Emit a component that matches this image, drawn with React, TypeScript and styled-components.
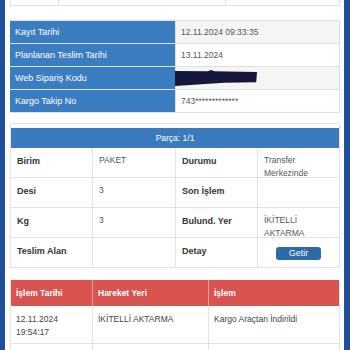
import { Fragment } from "react";
import styled, { createGlobalStyle } from "styled-components";

const GlobalStyle = createGlobalStyle`
  html, body {
    margin: 0;
    padding: 0;
    background: #fff;
  }
  body {
    font-family: "Liberation Sans", Arial, sans-serif;
    -webkit-font-smoothing: antialiased;
  }
`;

const Page = styled.div`
  box-sizing: border-box;
  height: 350px;
  overflow: hidden;
  border-left: 5px solid #1f4f9b;
  border-right: 6px solid #1f4f9b;
  padding: 0 4px 0 5px;
`;

const PrevTable = styled.div`
  display: grid;
  grid-template-columns: 48px 167px 1fr;
  height: 5px;
  border: 1px solid #e2e2e2;
  border-top: none;
`;

const PrevCell = styled.div`
  border-right: 1px solid #e2e2e2;
  &:last-child {
    border-right: none;
  }
`;

const InfoTable = styled.div`
  margin-top: 14px;
  display: grid;
  grid-template-columns: 165px 1fr;
  border: 1px solid #e0e0e0;
  border-left: none;
`;

const InfoLabel = styled.div`
  height: 22px;
  display: flex;
  align-items: center;
  padding-left: 5px;
  background: #3b7dc1;
  color: #fff;
  font-size: 9px;
  border-bottom: 1px solid #dbe6f2;
  &:nth-last-child(2) {
    border-bottom: none;
  }
`;

const InfoValue = styled.div<{ $striped?: boolean }>`
  height: 22px;
  display: flex;
  align-items: center;
  padding-left: 5px;
  background: ${({ $striped }) => ($striped ? "#f5f5f5" : "#fff")};
  color: #555;
  font-size: 8.5px;
  border-left: 1px solid #e0e0e0;
  border-bottom: 1px solid #e0e0e0;
  &:last-child {
    border-bottom: none;
  }
`;

const Redacted = styled.span`
  display: inline-block;
  margin-left: -6px;
  width: 82px;
  height: 16px;
  background: #16173a;
  clip-path: polygon(0 6%, 40% 8%, 44% 0, 48% 8%, 100% 12%, 99% 76%, 60% 80%, 0 100%);
`;

const RedactedTail = styled.span`
  font-size: 8px;
  color: #777;
  margin-left: -5px;
`;

const Panel = styled.div`
  margin-top: 10px;
  border: 1px solid #e3e3e3;
  border-radius: 2px;
  padding-top: 4px;
`;

const PanelHeader = styled.div`
  height: 20px;
  display: flex;
  align-items: center;
  justify-content: center;
  background: #3a7bbf;
  color: #fff;
  font-size: 8.5px;
`;

const PartGrid = styled.div`
  display: grid;
  grid-template-columns: 82px 83px 82px 1fr;
`;

const PartCell = styled.div<{ $bold?: boolean; $last?: boolean }>`
  height: 23px;
  padding: 6px 5px 0 6px;
  border-right: 1px solid #e3e3e3;
  border-bottom: ${({ $last }) => ($last ? "none" : "1px solid #e3e3e3")};
  font-size: ${({ $bold }) => ($bold ? "9px" : "8.5px")};
  font-weight: ${({ $bold }) => ($bold ? 700 : 400)};
  color: ${({ $bold }) => ($bold ? "#333" : "#555")};
  line-height: ${({ $bold }) => ($bold ? "14px" : "13px")};
  &:nth-child(4n) {
    border-right: none;
  }
`;

const ButtonCell = styled(PartCell)`
  display: flex;
  justify-content: center;
  align-items: center;
  padding: 2px 6px 0;
  height: 27px;
`;

const GetirButton = styled.button`
  width: 45px;
  height: 13px;
  padding: 0;
  border: none;
  border-radius: 3px;
  background: #2c6aa6;
  color: #fff;
  font-family: inherit;
  font-size: 9px;
  line-height: 13px;
`;

const MoveTable = styled.div`
  margin-top: 12px;
  display: grid;
  grid-template-columns: 82px 116px 1fr;
  border: 1px solid #e3e3e3;
  border-top: none;
`;

const MoveHead = styled.div`
  height: 26px;
  display: flex;
  align-items: center;
  padding-left: 5px;
  background: #d9534f;
  color: #fff;
  font-size: 8.5px;
  font-weight: 700;
  border-right: 1px solid #e79a98;
  &:nth-child(3) {
    border-right: none;
  }
`;

const MoveCell = styled.div`
  min-height: 30px;
  padding: 7px 5px 0;
  font-size: 8.5px;
  line-height: 13px;
  color: #444;
  border-right: 1px solid #e3e3e3;
  border-bottom: 1px solid #e3e3e3;
  &:nth-child(3n) {
    border-right: none;
  }
`;

const info = [
  { label: "Kayıt Tarihi", value: "12.11.2024 09:33:35" },
  { label: "Planlanan Teslim Tarihi", value: "13.11.2024" },
  { label: "Web Sipariş Kodu", value: null },
  { label: "Kargo Takip No", value: "743*************" },
];

const App = () => {
  return (
    <>
      <GlobalStyle />
      <Page>
        <PrevTable>
          <PrevCell />
          <PrevCell />
          <PrevCell />
        </PrevTable>

        <InfoTable>
          {info.map((row, i) => (
            <Fragment key={row.label}>
              <InfoLabel>{row.label}</InfoLabel>
              <InfoValue $striped={i % 2 === 0}>
                {row.value ?? (
                  <>
                    <Redacted />
                    <RedactedTail>9</RedactedTail>
                  </>
                )}
              </InfoValue>
            </Fragment>
          ))}
        </InfoTable>

        <Panel>
          <PanelHeader>Parça: 1/1</PanelHeader>
          <PartGrid>
            <PartCell $bold>Birim</PartCell>
            <PartCell>PAKET</PartCell>
            <PartCell $bold>Durumu</PartCell>
            <PartCell>
              Transfer
              <br />
              Merkezinde
            </PartCell>

            <PartCell $bold>Desi</PartCell>
            <PartCell>3</PartCell>
            <PartCell $bold>Son İşlem</PartCell>
            <PartCell />

            <PartCell $bold>Kg</PartCell>
            <PartCell>3</PartCell>
            <PartCell $bold>Bulund. Yer</PartCell>
            <PartCell>
              İKİTELLİ
              <br />
              AKTARMA
            </PartCell>

            <PartCell $bold $last>Teslim Alan</PartCell>
            <PartCell $last />
            <PartCell $bold $last>Detay</PartCell>
            <ButtonCell $last>
              <GetirButton type="button">Getir</GetirButton>
            </ButtonCell>
          </PartGrid>
        </Panel>

        <MoveTable>
          <MoveHead>İşlem Tarihi</MoveHead>
          <MoveHead>Hareket Yeri</MoveHead>
          <MoveHead>İşlem</MoveHead>

          <MoveCell>
            12.11.2024
            <br />
            19:54:17
          </MoveCell>
          <MoveCell>İKİTELLİ AKTARMA</MoveCell>
          <MoveCell>Kargo Araçtan İndirildi</MoveCell>

          <MoveCell />
          <MoveCell />
          <MoveCell />
        </MoveTable>
      </Page>
    </>
  );
};

export default App;
